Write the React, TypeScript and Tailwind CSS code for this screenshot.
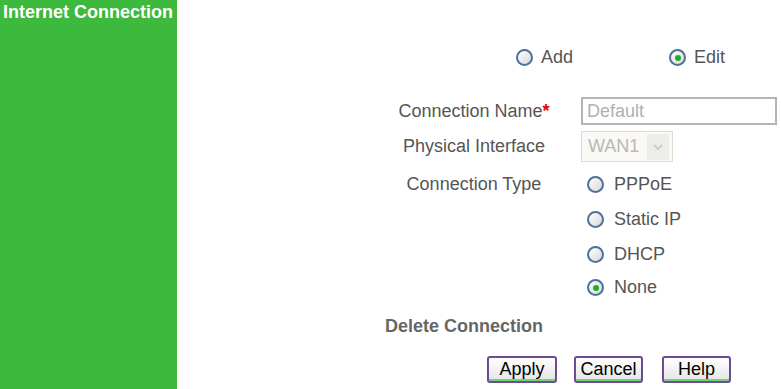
import React from "react";

const Radio: React.FC<{ checked?: boolean }> = ({ checked }) => (
  <span className="inline-flex h-[17px] w-[17px] shrink-0 items-center justify-center rounded-full border-2 border-[#4f6f9c] bg-gradient-to-br from-white to-[#d8d8d8]">
    {checked && <span className="h-[6px] w-[6px] rounded-full bg-[#1fb01f]" />}
  </span>
);

const Btn: React.FC<{ label: string; w: string }> = ({ label, w }) => (
  <button
    className={`${w} h-[27px] rounded-[3px] border-2 border-[#6b4b96] bg-gradient-to-b from-white to-[#e4e4e4] text-[18px] leading-[21px] text-black shadow-[inset_0_-2px_0_#74d474]`}
  >
    {label}
  </button>
);

const App: React.FC = () => {
  return (
    <div className="flex h-[389px] w-[781px] bg-white font-['Liberation_Sans',Arial,sans-serif] text-[18px] text-[#555]">
      <aside className="w-[177px] shrink-0 bg-[#3dba3d] px-[3px] pt-[2px]">
        <h1 className="text-[18px] font-bold leading-[21px] text-white">Internet Connection</h1>
      </aside>
      <main className="flex-1 pt-[47px]">
        <div className="flex h-[21px] items-center">
          <label className="ml-[339px] flex items-center gap-[8px]">
            <Radio />
            <span>Add</span>
          </label>
          <label className="ml-[96px] flex items-center gap-[8px]">
            <Radio checked />
            <span>Edit</span>
          </label>
        </div>
        <div className="mt-[29px] flex items-center">
          <div className="w-[404px] pl-[190px] text-center">
            Connection Name<span className="font-bold text-[#e00]">*</span>
          </div>
          <div className="h-[28px] w-[196px] border-2 border-[#b4b4b4] px-[4px] leading-[24px] text-[#b0b0b0]">Default</div>
        </div>
        <div className="mt-[6px] flex items-center">
          <div className="w-[404px] pl-[190px] text-center">Physical Interface</div>
          <div className="flex h-[31px] w-[92px] items-center border border-[#dedbd0] bg-[#faf9f5] pl-[6px] text-[#b8b8b8]">
            <span className="flex-1">WAN1</span>
            <span className="mr-[3px] flex h-[26px] w-[22px] items-center justify-center bg-[#ecece8]">
              <svg width="10" height="6" viewBox="0 0 10 6">
                <path d="M1 1l4 4 4-4" stroke="#c2c2c2" strokeWidth="1.6" fill="none" />
              </svg>
            </span>
          </div>
        </div>
        <div className="mt-[12px] flex">
          <div className="w-[404px] pl-[190px] text-center leading-[21px]">Connection Type</div>
          <div className="flex flex-col pl-[6px]">
            {["PPPoE", "Static IP", "DHCP", "None"].map((t, i) => (
              <label
                key={t}
                className={`flex h-[21px] items-center gap-[10px] ${i === 0 ? "" : i === 3 ? "mt-[12px]" : "mt-[14px]"}`}
              >
                <Radio checked={t === "None"} />
                <span>{t}</span>
              </label>
            ))}
          </div>
        </div>
        <div className="mt-[18px] pl-[208px] font-bold leading-[21px] text-[#666]">Delete Connection</div>
        <div className="mt-[19px] flex pl-[310px]">
          <Btn label="Apply" w="w-[70px]" />
          <span className="w-[17px]" />
          <Btn label="Cancel" w="w-[69px]" />
          <span className="w-[19px]" />
          <Btn label="Help" w="w-[69px]" />
        </div>
      </main>
    </div>
  );
};

export default App;
